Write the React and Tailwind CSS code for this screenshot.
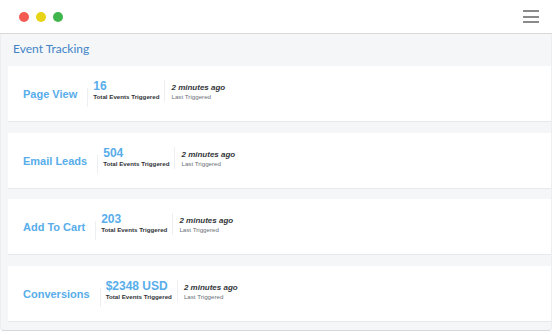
const events = [
  { name: "Page View", total: "16" },
  { name: "Email Leads", total: "504" },
  { name: "Add To Cart", total: "203" },
  { name: "Conversions", total: "$2348 USD" },
];

function EventRow({ name, total }) {
  return (
    <div className="flex h-[56px] items-start border-b border-[#e6eaee] bg-white pl-[15px] font-['Liberation_Sans',Arial,sans-serif]">
      <div className="mt-[23px] pr-[10px] text-[11px] font-bold leading-[11px] text-[#58adea]">{name}</div>
      <div className="mt-[22px] h-[19px] w-px bg-[#edf0f2]" />
      <div className="mt-[14px] pl-[5px] pr-[5px]">
        <div className="text-[12px] font-bold leading-[12px] text-[#58adea]">{total}</div>
        <div className="mt-[1px] whitespace-nowrap text-[6.2px] font-bold leading-[7px] text-[#2f3337]">Total Events Triggered</div>
      </div>
      <div className="mt-[14px] h-[22px] border-l border-[#edf0f2] pl-[6px] pt-[4px]">
        <div className="whitespace-nowrap text-[8px] font-bold italic leading-[8px] text-[#33373b]">2 minutes ago</div>
        <div className="mt-[1px] whitespace-nowrap text-[6.2px] leading-[7px] text-[#6b7078]">Last Triggered</div>
      </div>
    </div>
  );
}

export default function App() {
  return (
    <div className="h-[335px] w-[552px] overflow-hidden bg-white">
      <div className="flex h-[34px] items-center justify-between border-b border-[#d9d9d9] bg-white pl-[19px] pr-[13px]">
        <div className="flex gap-[7px]">
          <span className="h-[10px] w-[10px] rounded-full bg-[#f25a52]" />
          <span className="h-[10px] w-[10px] rounded-full bg-[#e8d417]" />
          <span className="h-[10px] w-[10px] rounded-full bg-[#40b54c]" />
        </div>
        <div className="flex flex-col gap-[3.5px]">
          <span className="h-[2px] w-[16px] bg-[#8a8a8a]" />
          <span className="h-[2px] w-[16px] bg-[#8a8a8a]" />
          <span className="h-[2px] w-[16px] bg-[#8a8a8a]" />
        </div>
      </div>
      <div className="h-[297px] rounded-b-[4px] border-x border-b border-x-[#eceef0] border-b-[#d6d9dc] bg-[#f4f6f8] pl-[7px]">
        <div className="pl-[5px] pt-[7px] font-['Lato',sans-serif] text-[12px] leading-[16px] text-[#4384c6]">Event Tracking</div>
        <div className="mt-[9px] flex flex-col gap-[10.5px]">
          {events.map(e => (
            <EventRow key={e.name} name={e.name} total={e.total} />
          ))}
        </div>
      </div>
    </div>
  );
}
